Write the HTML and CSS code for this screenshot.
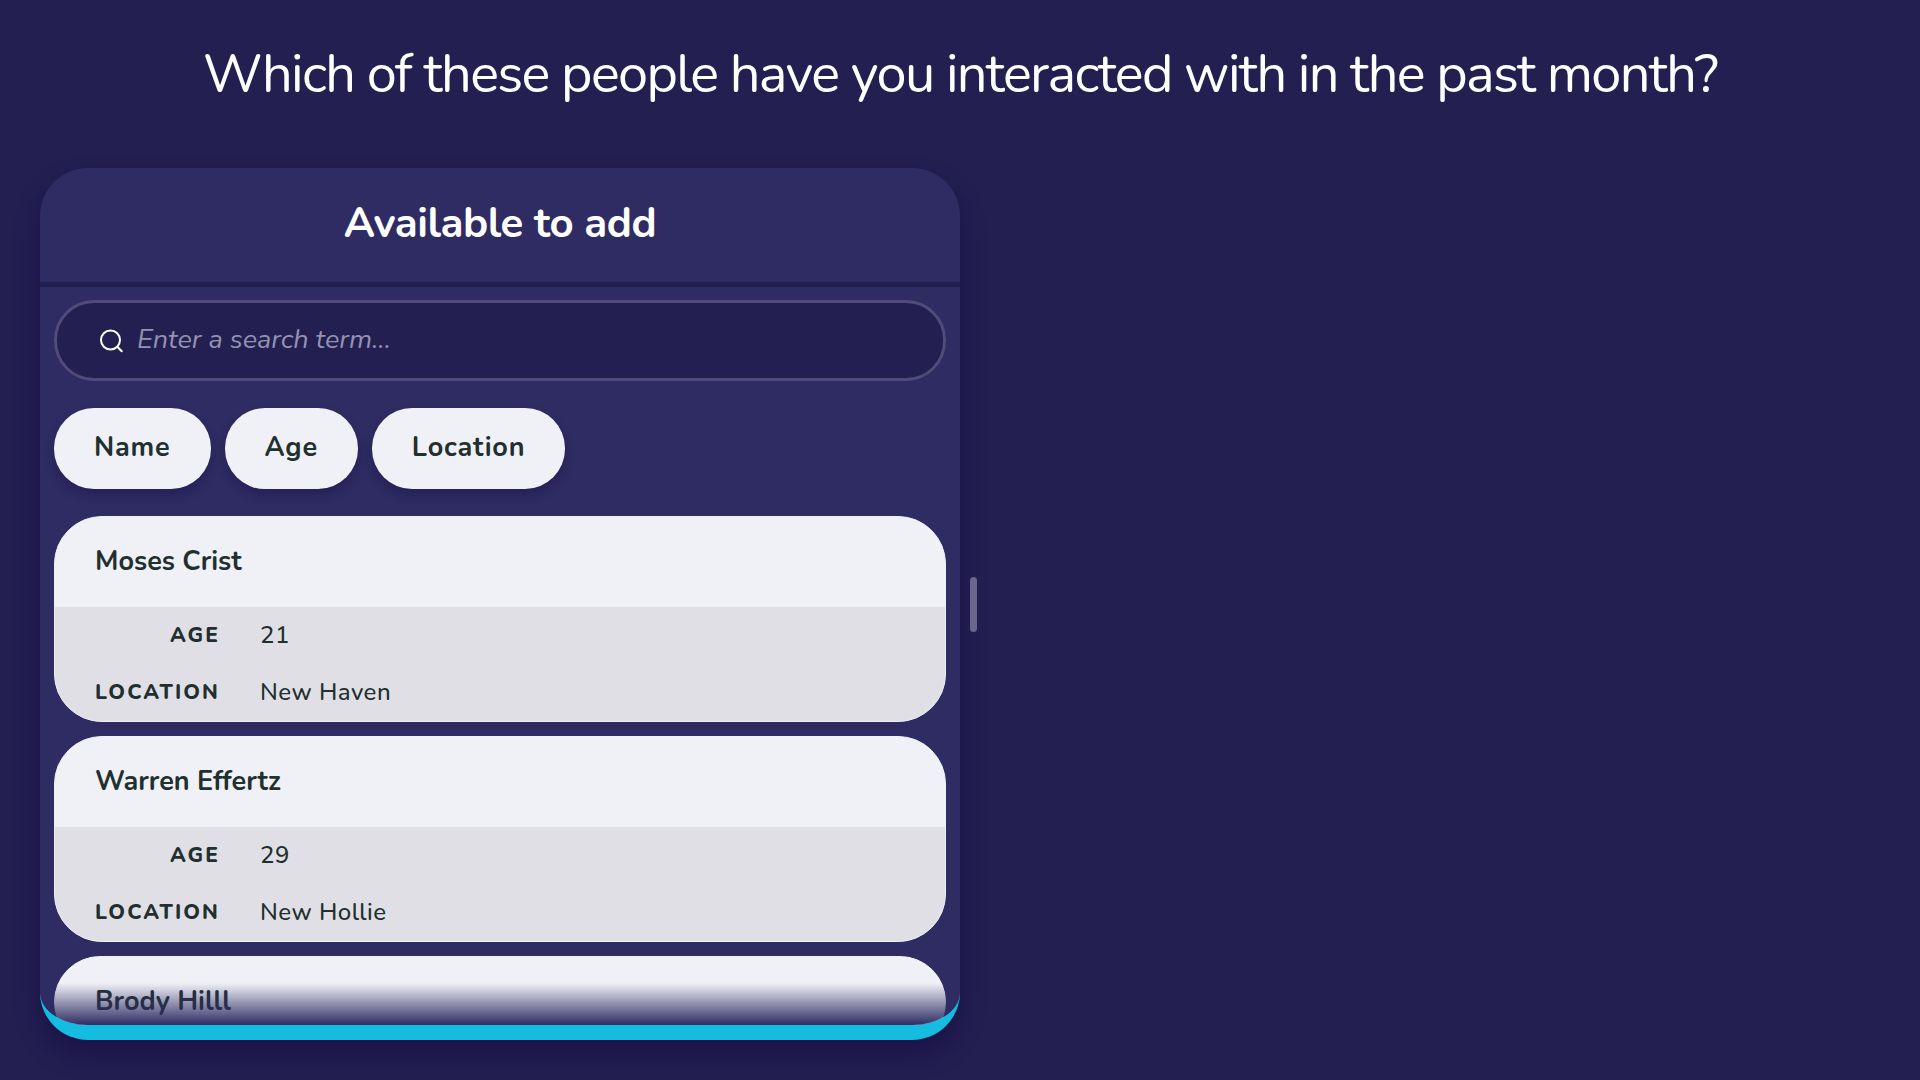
FILE: index.html
```html
<!DOCTYPE html>
<html lang="en">
  <head>
    <meta charset="UTF-8" />
    <meta name="viewport" content="width=device-width, initial-scale=1.0" />
    <title>Interview</title>
    <link rel="stylesheet" href="styles.css" />
  </head>
  <body>
    <h1 class="prompt">Which of these people have you interacted with in the past month?</h1>

    <main class="panels">
      <section class="panel">
        <h2 class="panel-title">Available to add</h2>

        <div class="panel-body">
          <label class="search" for="search">
            <svg class="search-icon" viewBox="0 0 24 24" role="img" aria-label="Search">
              <circle cx="11.5" cy="11" r="9.5" />
              <path d="M18.3 17.8 L22.7 22.2" />
            </svg>
            <input type="search" class="search-input" id="search" placeholder="Enter a search term..." />
          </label>

          <div class="sort">
            <button type="button" class="sort-btn">Name</button>
            <button type="button" class="sort-btn">Age</button>
            <button type="button" class="sort-btn">Location</button>
          </div>

          <div class="cards">
            <article class="card">
              <h3 class="card-name">Moses Crist</h3>
              <dl class="card-details">
                <dt>Age</dt>
                <dd>21</dd>
                <dt>Location</dt>
                <dd>New Haven</dd>
              </dl>
            </article>
            <article class="card">
              <h3 class="card-name">Warren Effertz</h3>
              <dl class="card-details">
                <dt>Age</dt>
                <dd>29</dd>
                <dt>Location</dt>
                <dd>New Hollie</dd>
              </dl>
            </article>
            <article class="card">
              <h3 class="card-name">Brody Hilll</h3>
            </article>
          </div>
        </div>
      </section>

      <div class="resize-handle" role="separator" aria-orientation="vertical"></div>

      <section class="drop-area"></section>
    </main>
  </body>
</html>
```

FILE: styles.css
```css
:root {
  --background: #231f51;
  --panel: #2e2c62;
  --surface: #f0f1f7;
  --surface-muted: #e0dfe6;
  --text: #21302f;
  --accent: #14bce0;
}

* {
  box-sizing: border-box;
}

body {
  font-family: Nunito, Lato, sans-serif;
  margin: 0;
  padding: 40px;
  height: 100vh;
  display: flex;
  flex-direction: column;
  gap: 60px;
  background-color: var(--background);
  color: #fff;
}

.prompt {
  margin: 0;
  font-size: 54px;
  line-height: 68px;
  font-weight: 400;
  letter-spacing: -0.03em;
  text-align: center;
}

.panels {
  flex: 1;
  min-height: 0;
  display: flex;
  align-items: stretch;
}

.panel {
  flex: 0 0 50%;
  display: flex;
  flex-direction: column;
  overflow: hidden;
  background-color: var(--panel);
  border-bottom: 15px solid var(--accent);
  border-radius: 48px;
  box-shadow: 0 14px 24px rgba(20, 5, 60, 0.45);
}

.panel-title {
  margin: 0;
  padding: 29px 40px 31px;
  font-size: 42px;
  line-height: 54px;
  font-weight: 700;
  letter-spacing: -0.01em;
  text-align: center;
  border-bottom: 5px solid var(--background);
}

.panel-body {
  position: relative;
  flex: 1;
  min-height: 0;
  overflow: hidden;
  padding: 13px 14px 0;
}

/* fades the list out above the bottom edge */
.panel-body::after {
  content: "";
  position: absolute;
  left: 0;
  right: 0;
  bottom: 0;
  height: 42px;
  background: linear-gradient(rgba(46, 44, 98, 0), var(--panel));
  pointer-events: none;
}

.search {
  display: flex;
  align-items: center;
  gap: 14px;
  height: 81px;
  padding: 0 42px;
  background-color: var(--background);
  border: 3px solid #504b78;
  border-radius: 40px;
}

.search-icon {
  width: 24px;
  height: 24px;
  flex: none;
  fill: none;
  stroke: #fff;
  stroke-width: 2;
  stroke-linecap: round;
}

.search-input {
  flex: 1;
  min-width: 0;
  padding: 0 0 2px;
  border: none;
  outline: none;
  background: none;
  color: #fff;
  font-family: inherit;
  font-size: 27px;
}

.search-input::placeholder {
  color: #9491b2;
  font-style: italic;
  opacity: 1;
}

.sort {
  display: flex;
  gap: 14px;
  margin: 27px 0;
}

.sort-btn {
  height: 81px;
  padding: 0 40px 2px;
  border: none;
  border-radius: 40px;
  background-color: var(--surface);
  color: var(--text);
  font-family: inherit;
  font-size: 27px;
  font-weight: 700;
  letter-spacing: 0.03em;
  box-shadow: 0 6px 10px rgba(30, 15, 75, 0.4);
  cursor: pointer;
}

.cards {
  display: flex;
  flex-direction: column;
  gap: 14px;
}

.card {
  overflow: hidden;
  background-color: var(--surface);
  border: 1px solid var(--surface);
  border-radius: 48px;
  color: var(--text);
}

.card-name {
  margin: 0;
  padding: 28px 40px;
  font-size: 27px;
  line-height: 34px;
  font-weight: 700;
}

.card-details {
  display: grid;
  grid-template-columns: max-content 1fr;
  column-gap: 40px;
  margin: 0;
  padding: 0 40px;
  background-color: var(--surface-muted);
  line-height: 57px;
}

.card-details dt {
  font-size: 21px;
  font-weight: 800;
  letter-spacing: 0.1em;
  text-transform: uppercase;
  text-align: right;
}

.card-details dd {
  margin: 0;
  font-size: 24px;
  font-weight: 500;
  letter-spacing: 0.02em;
}

.resize-handle {
  align-self: center;
  width: 7px;
  height: 55px;
  margin: 0 10px;
  border-radius: 4px;
  background-color: #69658b;
}

.drop-area {
  flex: 1;
}
```
